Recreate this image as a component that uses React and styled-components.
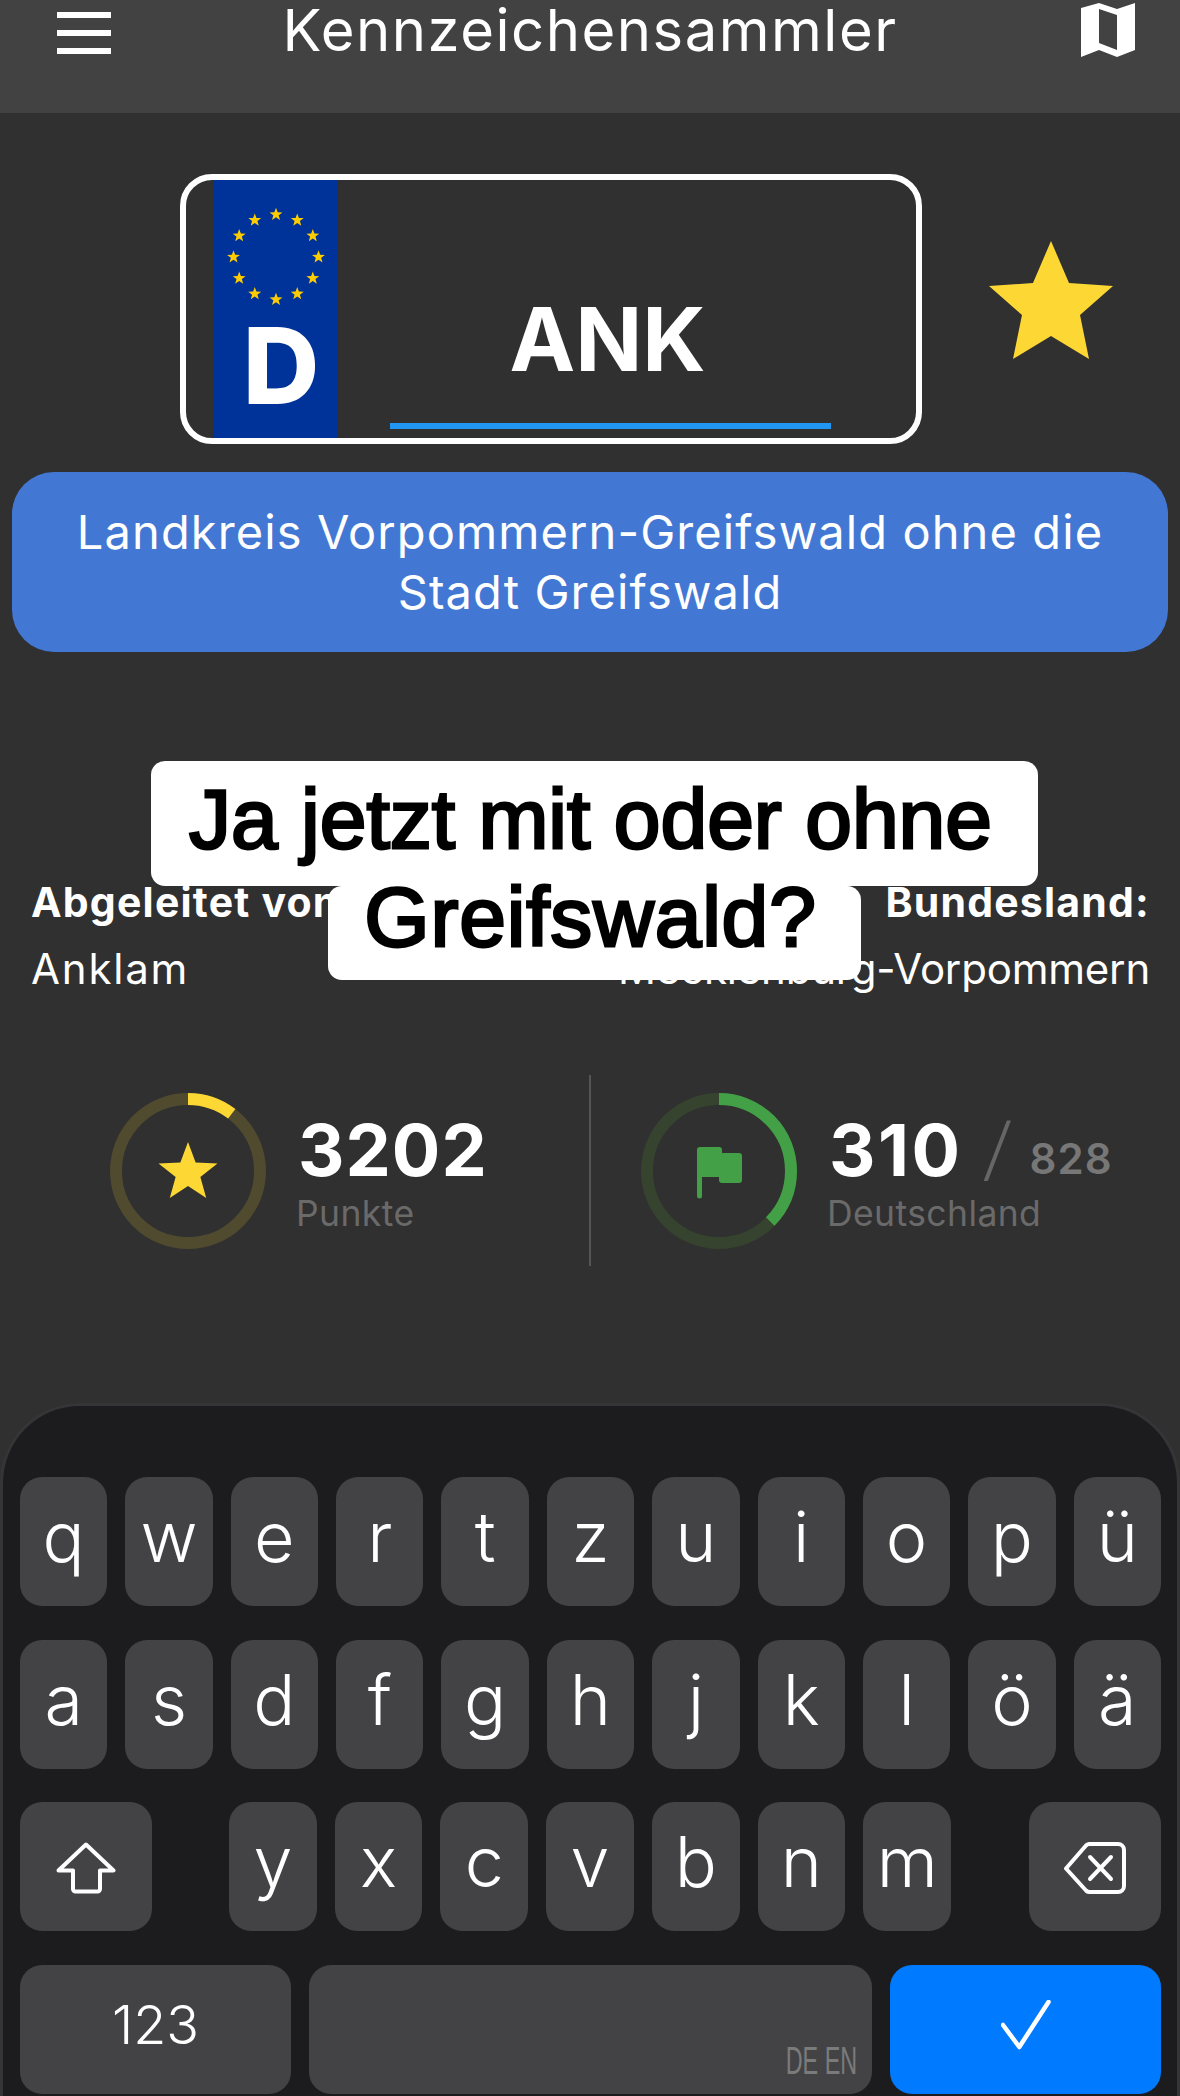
import React from 'react';
import styled, { createGlobalStyle } from 'styled-components';

const GlobalStyle = createGlobalStyle`
    html, body {
        margin: 0;
        padding: 0;
        background: #303030;
    }
    * {
        box-sizing: border-box;
    }
`;

const Page = styled.div`
    position: relative;
    width: 1180px;
    height: 2096px;
    overflow: hidden;
    background: #303030;
    font-family: Inter, Roboto, sans-serif;
    color: #fff;
`;

const Header = styled.header`
    height: 113px;
    background: #424242;
    display: grid;
    grid-template-columns: 1fr auto 1fr;
    align-items: start;
    padding: 0 45px;
`;

const Menu = styled.div`
    width: 54px;
    display: flex;
    flex-direction: column;
    gap: 12px;
    margin: 12px 0 0 12px;
    span {
        height: 6px;
        background: #fff;
    }
`;

const Title = styled.h1`
    margin: 0;
    font-size: 58px;
    font-weight: 400;
    line-height: 60px;
    letter-spacing: 1.5px;
`;

const MapIcon = styled.svg`
    justify-self: end;
    width: 54px;
    height: 54px;
    margin-top: 3px;
`;

const PlateRow = styled.div`
    display: flex;
    align-items: center;
    padding: 61px 0 0 180px;
    gap: 67px;
`;

const Plate = styled.div`
    width: 742px;
    height: 270px;
    border: 6px solid #fff;
    border-radius: 32px;
    display: flex;
    padding-left: 28px;
`;

const EuStrip = styled.div`
    width: 124px;
    background: #003399;
    display: flex;
    flex-direction: column;
    align-items: center;
`;

const EuStars = styled.svg`
    width: 100px;
    height: 100px;
    margin-top: 27px;
`;

const Country = styled.span`
    font-weight: 800;
    font-size: 106px;
    line-height: 106px;
    margin: 6px 0 0 10px;
`;

const PlateInput = styled.div`
    flex: 1;
    display: flex;
    flex-direction: column;
    align-items: center;
    padding: 115px 85px 0 52px;
`;

const PlateText = styled.span`
    font-size: 88px;
    line-height: 88px;
    font-weight: 700;
    margin-left: -6px;
`;

const PlateCursor = styled.div`
    align-self: stretch;
    height: 6px;
    margin-top: 40px;
    background: #2196f3;
`;

const BigStar = styled.svg`
    width: 124px;
    height: 118px;
    margin-top: -18px;
`;

const DescBox = styled.div`
    margin: 28px 12px 0;
    height: 180px;
    border-radius: 42px;
    background: #4278d4;
    display: flex;
    align-items: center;
    justify-content: center;
    text-align: center;
    font-size: 47px;
    line-height: 60px;
    letter-spacing: 1.1px;
    padding: 0 40px;
`;

const InfoRow = styled.div`
    display: flex;
    justify-content: space-between;
    padding: 227px 30px 0 31px;
`;

const InfoCol = styled.div`
    display: flex;
    flex-direction: column;
    gap: 21px;
    align-items: ${p => (p.$right ? 'flex-end' : 'flex-start')};
`;

const InfoLabel = styled.span`
    font-size: 41px;
    line-height: 46px;
    font-weight: 700;
    letter-spacing: 1.2px;
`;

const InfoValue = styled.span`
    font-size: 42px;
    line-height: 46px;
    letter-spacing: ${p => p.$ls}px;
`;

const Caption = styled.div`
    position: absolute;
    top: 761px;
    left: 0;
    right: 0;
    padding-left: 9px;
    display: flex;
    flex-direction: column;
    align-items: center;
    font-family: 'Liberation Sans', Arial, sans-serif;
    font-size: 84px;
    font-weight: 400;
    color: #000;
    -webkit-text-stroke: 2.8px #000;
`;

const CaptionLine = styled.span`
    background: #fff;
    border-radius: 14px;
    width: ${p => p.$w}px;
    height: ${p => p.$h}px;
    line-height: ${p => p.$lh}px;
    letter-spacing: ${p => p.$ls || 0}px;
    padding-right: 8px;
    text-align: center;
    white-space: nowrap;
`;

const Stats = styled.div`
    display: flex;
    align-items: center;
    margin-top: 83px;
    height: 191px;
`;

const StatSide = styled.div`
    width: 590px;
    display: flex;
    align-items: center;
    padding-left: ${p => p.$pad}px;
    gap: 32px;
`;

const Divider = styled.div`
    width: 2px;
    height: 191px;
    background: #555;
    margin: 0 -1px;
`;

const Ring = styled.div`
    position: relative;
    width: 156px;
    height: 156px;
    flex: none;
    svg {
        display: block;
    }
`;

const RingIcon = styled.svg`
    position: absolute;
    left: 48px;
    top: 48px;
    width: 60px;
    height: 60px;
`;

const StatText = styled.div`
    display: flex;
    flex-direction: column;
    margin-top: 6px;
`;

const StatLine = styled.div`
    display: flex;
    align-items: baseline;
`;

const StatValue = styled.span`
    font-size: 72px;
    line-height: 76px;
    font-weight: 700;
    letter-spacing: ${p => p.$ls || 1}px;
`;

const StatSlash = styled.span`
    font-family: Roboto, sans-serif;
    font-size: 78px;
    line-height: 76px;
    font-weight: 300;
    color: #666;
    margin: 0 16px 0 20px;
`;

const StatTotal = styled.span`
    font-size: 42px;
    font-weight: 600;
    letter-spacing: 1px;
    color: #777;
    transform: translateY(-2px);
`;

const StatLabel = styled.span`
    font-size: 35.5px;
    line-height: 44px;
    letter-spacing: 0.4px;
    color: #6a6a6a;
    margin: 4px 0 0 -2px;
`;

const Keyboard = styled.div`
    position: absolute;
    left: 0;
    right: 0;
    bottom: 0;
    height: 693px;
    background: #1c1c1e;
    border: 3px solid #353537;
    border-bottom: 0;
    border-radius: 80px 80px 0 0;
    padding: 71px 16px 2px 17px;
    display: flex;
    flex-direction: column;
    gap: 33.5px;
`;

const KeyRow = styled.div`
    display: flex;
    gap: 18px;
    height: 129px;
`;

const Key = styled.div`
    width: ${p => (p.$w ? `${p.$w}px` : 'auto')};
    flex: ${p => (p.$w ? 'none' : '1')};
    margin-left: ${p => p.$ml || 0}px;
    background: ${p => (p.$blue ? '#007aff' : '#434345')};
    border-radius: 22px;
    display: flex;
    align-items: center;
    justify-content: center;
    position: relative;
    font-size: ${p => p.$size || 70}px;
    font-weight: 350;
`;

const KeyLabel = styled.span`
    margin-top: -10px;
`;

const KeyIcon = styled.svg`
    fill: none;
    stroke: #fff;
    stroke-width: ${p => p.$sw || 4};
    stroke-linejoin: round;
    stroke-linecap: round;
    margin-top: ${p => p.$dy || 0}px;
`;

const LangHint = styled.span`
    position: absolute;
    right: 15px;
    bottom: 14px;
    font-family: 'Liberation Sans', sans-serif;
    font-size: 39px;
    line-height: 39px;
    color: #7b7b7b;
    transform: scaleX(0.6);
    transform-origin: right center;
`;

const starPoints = (cx, cy, R, r) => {
    const pts = [];
    for (let i = 0; i < 10; i++) {
        const rad = i % 2 === 0 ? R : r;
        const a = (Math.PI / 5) * i - Math.PI / 2;
        pts.push(`${(cx + rad * Math.cos(a)).toFixed(2)},${(cy + rad * Math.sin(a)).toFixed(2)}`);
    }
    return pts.join(' ');
};

const euStars = Array.from({ length: 12 }, (_, i) => {
    const a = (Math.PI / 6) * i;
    return [50 + 42.5 * Math.sin(a), 50 - 42.5 * Math.cos(a)];
});

const ProgressRing = ({ color, track, value, children }) => (
    <Ring>
        <svg width="156" height="156" viewBox="0 0 156 156">
            <circle cx="78" cy="78" r="72" fill="none" stroke={track} strokeWidth="12" />
            <circle
                cx="78"
                cy="78"
                r="72"
                fill="none"
                stroke={color}
                strokeWidth="12"
                pathLength="100"
                strokeDasharray={`${value} 100`}
                transform="rotate(-90 78 78)"
            />
        </svg>
        {children}
    </Ring>
);

const rows = [
    ['q', 'w', 'e', 'r', 't', 'z', 'u', 'i', 'o', 'p', 'ü'],
    ['a', 's', 'd', 'f', 'g', 'h', 'j', 'k', 'l', 'ö', 'ä'],
];

const App = () => (
    <Page>
        <GlobalStyle />
        <Header>
            <Menu>
                <span />
                <span />
                <span />
            </Menu>
            <Title>Kennzeichensammler</Title>
            <MapIcon viewBox="0 0 54 54">
                <path
                    fill="#fff"
                    fillRule="evenodd"
                    d="M0 5 L18 0 L36 6 L54 0 L54 47 L36 54 L18 47 L0 54 Z M18 6 L18 40 L36 47 L36 12 Z"
                />
            </MapIcon>
        </Header>
        <PlateRow>
            <Plate>
                <EuStrip>
                    <EuStars viewBox="0 0 100 100">
                        {euStars.map(([x, y], i) => (
                            <polygon key={i} points={starPoints(x, y, 6.8, 2.8)} fill="#ffcc00" />
                        ))}
                    </EuStars>
                    <Country>D</Country>
                </EuStrip>
                <PlateInput>
                    <PlateText>ANK</PlateText>
                    <PlateCursor />
                </PlateInput>
            </Plate>
            <BigStar viewBox="0 0 124 118">
                <polygon points="62,0 80,42 124,45 91,74 100,118 62,95 24,118 33,74 0,45 44,42" fill="#fdd835" />
            </BigStar>
        </PlateRow>
        <DescBox>Landkreis Vorpommern-Greifswald ohne die Stadt Greifswald</DescBox>
        <InfoRow>
            <InfoCol>
                <InfoLabel>Abgeleitet von:</InfoLabel>
                <InfoValue $ls={1.8}>Anklam</InfoValue>
            </InfoCol>
            <InfoCol $right>
                <InfoLabel>Bundesland:</InfoLabel>
                <InfoValue $ls={-0.2}>Mecklenburg-Vorpommern</InfoValue>
            </InfoCol>
        </InfoRow>
        <Stats>
            <StatSide $pad={110}>
                <ProgressRing color="#fdd835" track="#504a2f" value={10.4}>
                    <RingIcon viewBox="0 0 60 60">
                        <polygon points={starPoints(30, 32, 31, 13)} fill="#fdd835" />
                    </RingIcon>
                </ProgressRing>
                <StatText>
                    <StatValue>3202</StatValue>
                    <StatLabel>Punkte</StatLabel>
                </StatText>
            </StatSide>
            <Divider />
            <StatSide $pad={51}>
                <ProgressRing color="#43a047" track="#35432f" value={37.4}>
                    <RingIcon viewBox="0 0 60 60">
                        <path
                            fill="#43a047"
                            d="M8 9 a3 3 0 0 1 3 -3 H30 a3 3 0 0 1 3 3 V12 H50 a3 3 0 0 1 3 3 V39 a3 3 0 0 1 -3 3 H33 a3 3 0 0 1 -3 -3 V36 H13 V55 a2.5 2.5 0 0 1 -5 0 Z"
                        />
                    </RingIcon>
                </ProgressRing>
                <StatText>
                    <StatLine>
                        <StatValue $ls={2.5}>310</StatValue>
                        <StatSlash>/</StatSlash>
                        <StatTotal>828</StatTotal>
                    </StatLine>
                    <StatLabel>Deutschland</StatLabel>
                </StatText>
            </StatSide>
        </Stats>
        <Caption>
            <CaptionLine $w={887} $h={125} $lh={117}>Ja jetzt mit oder ohne</CaptionLine>
            <CaptionLine $w={533} $h={94} $lh={63} $ls={0.8}>Greifswald?</CaptionLine>
        </Caption>
        <Keyboard>
            {rows.map(row => (
                <KeyRow key={row[0]}>
                    {row.map(k => (
                        <Key key={k}><KeyLabel>{k}</KeyLabel></Key>
                    ))}
                </KeyRow>
            ))}
            <KeyRow>
                <Key $w={132}>
                    <KeyIcon width="60" height="52" viewBox="0 0 60 52" $dy={2}>
                        <path d="M30 2.5 L57.5 28.5 H44 V47 a2.5 2.5 0 0 1 -2.5 2.5 H19.5 a2.5 2.5 0 0 1 -2.5 -2.5 V28.5 H2.5 Z" />
                    </KeyIcon>
                </Key>
                <Key $ml={59}><KeyLabel>y</KeyLabel></Key>
                <Key><KeyLabel>x</KeyLabel></Key>
                <Key><KeyLabel>c</KeyLabel></Key>
                <Key><KeyLabel>v</KeyLabel></Key>
                <Key><KeyLabel>b</KeyLabel></Key>
                <Key><KeyLabel>n</KeyLabel></Key>
                <Key><KeyLabel>m</KeyLabel></Key>
                <Key $w={132} $ml={60}>
                    <KeyIcon width="62" height="52" viewBox="0 0 62 52" $dy={2}>
                        <path d="M2 26.5 L22 3.5 a5 5 0 0 1 3 -1.5 H54 a6 6 0 0 1 6 6 V44 a6 6 0 0 1 -6 6 H25 a5 5 0 0 1 -3 -1.5 Z" />
                        <path d="M26 15 L47 37 M47 15 L26 37" />
                    </KeyIcon>
                </Key>
            </KeyRow>
            <KeyRow>
                <Key $w={271} $size={54}><KeyLabel>123</KeyLabel></Key>
                <Key>
                    <LangHint>DE EN</LangHint>
                </Key>
                <Key $w={271} $blue>
                    <KeyIcon width="50" height="50" viewBox="0 0 50 50" $dy={-8} $sw={4.5}>
                        <path d="M2 25 L18.3 47 L47.5 2" />
                    </KeyIcon>
                </Key>
            </KeyRow>
        </Keyboard>
    </Page>
);

export default App;
